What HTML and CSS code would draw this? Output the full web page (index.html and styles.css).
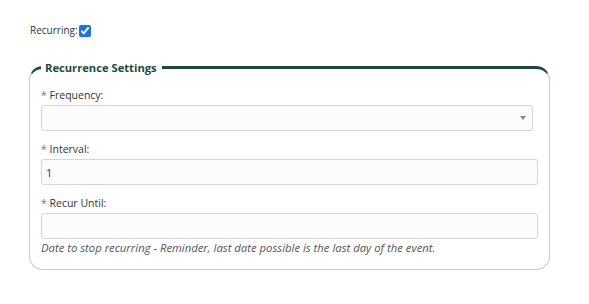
FILE: index.html
```html
<!DOCTYPE html>
<html lang="en">
<head>
    <meta charset="UTF-8">
    <meta name="viewport" content="width=device-width, initial-scale=1.0">
    <title>Recurrence Settings</title>
    <link rel="stylesheet" href="styles.css">
</head>
<body>
    <div class="page">
        <div class="recurring-row">
            <label for="recurring">Recurring:</label>
            <input type="checkbox" id="recurring" checked>
        </div>

        <fieldset class="recurrence">
            <legend>Recurrence Settings</legend>

            <div class="field first">
                <label class="field-label"><span class="req">*</span> Frequency:</label>
                <div class="select-wrap">
                    <select class="field-input"></select>
                </div>
            </div>

            <div class="field">
                <label class="field-label"><span class="req">*</span> Interval:</label>
                <input class="field-input" type="text" value="1">
            </div>

            <div class="field">
                <label class="field-label"><span class="req">*</span> Recur Until:</label>
                <input class="field-input" type="text">
                <p class="help">Date to stop recurring - Reminder, last date possible is the last day of the event.</p>
            </div>
        </fieldset>
    </div>
</body>
</html>
```

FILE: styles.css
```css
body {
    margin: 0;
    background-color: #fff;
    font-family: "Open Sans", "Liberation Sans", sans-serif;
    color: #333;
}

.page {
    padding: 23px 39px 0 30px;
}

.recurring-row {
    display: flex;
    align-items: center;
    gap: 1px;
    font-size: 10px;
    height: 14px;
}

.recurring-row input {
    width: 12px;
    height: 12px;
    margin: 1px 0 0 0;
    accent-color: #1a73e8;
}

.recurrence {
    margin: 23px 0 0 -1px;
    border: 1px solid #c8c8c8;
    border-top: 3px solid #1c4a3d;
    border-radius: 14px;
    padding: 0 11px 15px 11px;
}

.recurrence legend {
    font-weight: bold;
    font-size: 11.2px;
    color: #1c4a3d;
    padding: 0 5px 0 4px;
    margin-left: 0;
}

.field {
    margin-top: 11px;
}

.field.first {
    margin-top: 13px;
}

.field-label {
    display: block;
    font-size: 10.5px;
    line-height: 14px;
    margin-bottom: 3px;
}

.req {
    color: #d9534f;
}

.field-input {
    display: block;
    box-sizing: border-box;
    width: 100%;
    height: 26px;
    margin: 0;
    padding: 0 4px;
    border: 1px solid #d6d6d6;
    border-radius: 3px;
    background-color: #fcfcfc;
    font-family: inherit;
    font-size: 11px;
    color: #333;
}

.select-wrap {
    position: relative;
    margin-right: 5px;
}

.select-wrap select {
    appearance: none;
    -webkit-appearance: none;
}

.select-wrap::after {
    content: "";
    position: absolute;
    right: 7px;
    top: 11px;
    border-left: 3px solid transparent;
    border-right: 3px solid transparent;
    border-top: 4px solid #888;
}

.help {
    margin: 3px 0 0 0;
    font-size: 11.3px;
    font-style: italic;
    color: #555;
    line-height: 12px;
}
```
